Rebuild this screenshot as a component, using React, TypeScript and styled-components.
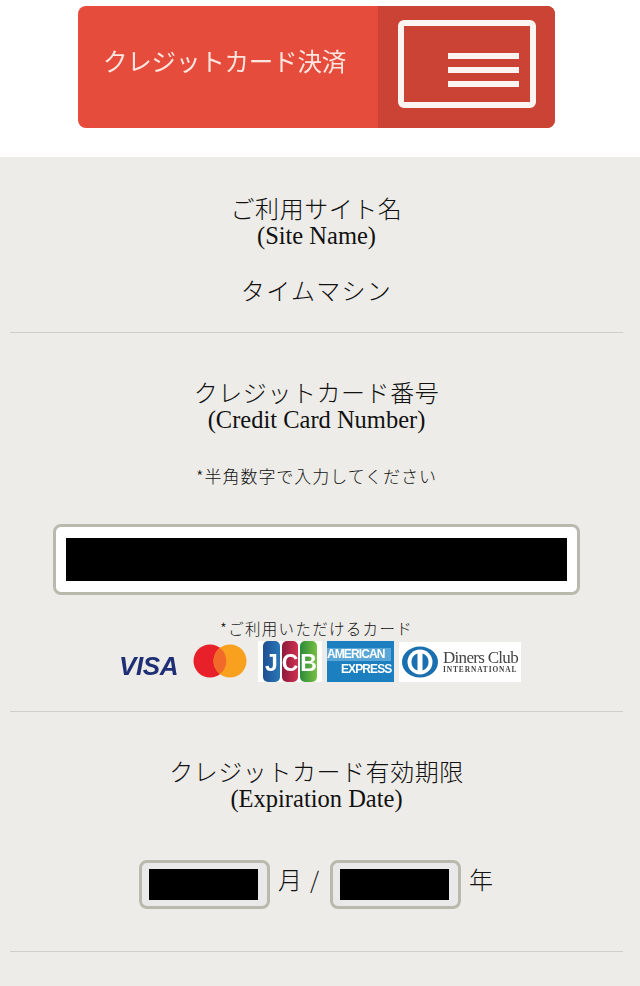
import React from "react";
import styled, { createGlobalStyle } from "styled-components";

const GlobalStyle = createGlobalStyle`
  html, body {
    margin: 0;
    padding: 0;
    background: #edece8;
    overflow: hidden;
  }
  body {
    font-family: "Liberation Serif", "Noto Sans CJK JP", serif;
    color: #111;
  }
`;

const Page = styled.div`
  width: 640px;
  height: 986px;
  overflow: hidden;
`;

const Top = styled.header`
  height: 157px;
  background: #fff;
  padding: 6px 0 0 78px;
  box-sizing: border-box;
`;

const PayButton = styled.div`
  width: 477px;
  height: 122px;
  border-radius: 8px;
  overflow: hidden;
  display: flex;
  background: #e64c3c;
  filter: blur(0.4px);
`;

const PayLabel = styled.div`
  width: 300px;
  padding: 37px 0 0 25px;
  box-sizing: border-box;
  color: #fbe6e0;
  font-family: "Noto Sans CJK JP", sans-serif;
  font-weight: 400;
  font-size: 24.5px;
  line-height: 36px;
  letter-spacing: -0.2px;
  white-space: nowrap;
`;

const MenuPart = styled.div`
  flex: 1;
  background: #cb4335;
  padding: 14px 0 0 20px;
`;

const MenuBox = styled.div`
  width: 138px;
  height: 88px;
  box-sizing: border-box;
  border: 6px solid #fbf4f0;
  border-radius: 6px;
  display: flex;
  flex-direction: column;
  align-items: flex-end;
  gap: 8px;
  padding: 27px 11px 0 0;
`;

const MenuLine = styled.span`
  width: 71px;
  height: 6px;
  background: #fbf4f0;
`;

const Section = styled.section<{ $height: number; $pad: number }>`
  margin: 0 17px 0 10px;
  height: ${(p) => p.$height}px;
  padding-top: ${(p) => p.$pad}px;
  box-sizing: border-box;
  border-bottom: 1px solid #cfcec8;
  display: flex;
  flex-direction: column;
  align-items: center;
`;

const Title = styled.div`
  font-family: "Noto Sans CJK JP", serif;
  font-weight: 300;
  font-size: 24px;
  line-height: 28px;
  letter-spacing: 0.55px;
  white-space: nowrap;
`;

const SubTitle = styled.div`
  font-size: 24.5px;
  line-height: 26px;
  margin-top: 1px;
  white-space: nowrap;
`;

const SiteValue = styled(Title)`
  margin-top: 27px;
  letter-spacing: 1.3px;
`;

const Hint = styled.div<{ $top: number; $size: number; $spacing: number }>`
  font-family: "Noto Sans CJK JP", serif;
  font-weight: 300;
  font-size: ${(p) => p.$size}px;
  line-height: 20px;
  letter-spacing: ${(p) => p.$spacing}px;
  margin-top: ${(p) => p.$top}px;
  white-space: nowrap;
`;

const NumberField = styled.div`
  width: 527px;
  height: 71px;
  box-sizing: border-box;
  margin-top: 38px;
  padding: 11px 10px;
  background: #fff;
  border: 3px solid #b9baad;
  border-radius: 8px;
`;

const Masked = styled.div`
  height: 100%;
  background: #000;
`;

const CardRow = styled.div`
  display: flex;
  align-items: flex-start;
  height: 41px;
  margin: 3px 0 0 7px;
  filter: blur(0.4px);
`;

const VisaMark = styled.div`
  width: 58px;
  margin: 12px 16px 0 0;
  color: #1f2f75;
  font-family: "Liberation Sans", sans-serif;
  font-weight: 700;
  font-style: italic;
  font-size: 26px;
  line-height: 26px;
  letter-spacing: -0.4px;
  text-align: center;
`;

const McMark = styled.svg`
  width: 54px;
  height: 34px;
  margin: 3px 11px 0 0;
`;

const JcbMark = styled.div`
  width: 64px;
  height: 41px;
  margin-right: 5px;
  background: #fff;
  box-sizing: border-box;
  padding: 0 5px;
  display: flex;
  gap: 2px;
`;

const JcbBar = styled.div<{ $from: string; $to: string }>`
  flex: 1;
  border-radius: 5px;
  background: linear-gradient(90deg, ${(p) => p.$from}, ${(p) => p.$to});
  color: #fff;
  font-family: "Liberation Sans", sans-serif;
  font-weight: 700;
  font-size: 23px;
  line-height: 44px;
  text-align: center;
  overflow: hidden;
`;

const AmexMark = styled.div`
  width: 67px;
  height: 41px;
  margin-right: 5px;
  background: #1c7fc0;
  color: #fff;
  font-family: "Liberation Sans", sans-serif;
  font-weight: 700;
  display: flex;
  flex-direction: column;
  overflow: hidden;
  white-space: nowrap;
`;

const AmexLine = styled.div<{ $indent: number }>`
  font-size: 12px;
  line-height: 13px;
  letter-spacing: -0.9px;
  margin: ${(p) => (p.$indent ? "2px" : "7px")} 0 0 ${(p) => p.$indent}px;
  background: ${(p) => (p.$indent ? "transparent" : "#5aa6d6")};
  width: ${(p) => 64 - p.$indent}px;
`;

const DinersMark = styled.div`
  width: 122px;
  height: 40px;
  margin-top: 1px;
  background: #fff;
  display: flex;
  align-items: center;
  padding-left: 2px;
  box-sizing: border-box;
  gap: 4px;
`;

const DinersRing = styled.svg`
  width: 38px;
  height: 32px;
  flex: none;
`;

const DinersText = styled.div`
  color: #444;
  font-family: "Liberation Serif", serif;
  white-space: nowrap;
`;

const DinersName = styled.div`
  font-size: 17px;
  line-height: 16px;
  letter-spacing: -0.7px;
`;

const DinersSub = styled.div`
  font-size: 7.4px;
  line-height: 8px;
  font-weight: 700;
  letter-spacing: 0.9px;
`;

const DateRow = styled.div`
  display: flex;
  align-items: center;
  margin: 47px 0 0 -1px;
  height: 50px;
`;

const DateField = styled.div`
  width: 131px;
  height: 49px;
  box-sizing: border-box;
  padding: 6px 9px 6px 7px;
  background: #e9e9e9;
  border: 3px solid #b9baad;
  border-radius: 8px;
`;

const DateUnit = styled.span<{ $gap: number }>`
  font-family: "Noto Sans CJK JP", serif;
  font-weight: 300;
  font-size: 24px;
  margin: -12px ${(p) => p.$gap}px 0 8px;
  white-space: nowrap;
`;

const Slash = styled.span`
  font-size: 23px;
  margin-left: 8px;
`;

export default function App() {
  return (
    <Page>
      <GlobalStyle />
      <Top>
        <PayButton>
          <PayLabel>クレジットカード決済</PayLabel>
          <MenuPart>
            <MenuBox>
              <MenuLine />
              <MenuLine />
              <MenuLine />
            </MenuBox>
          </MenuPart>
        </PayButton>
      </Top>
      <Section $height={176} $pad={37}>
        <Title>ご利用サイト名</Title>
        <SubTitle>(Site Name)</SubTitle>
        <SiteValue>タイムマシン</SiteValue>
      </Section>
      <Section $height={379} $pad={45}>
        <Title>クレジットカード番号</Title>
        <SubTitle>(Credit Card Number)</SubTitle>
        <Hint $top={33} $size={17} $spacing={0.95}>*半角数字で入力してください</Hint>
        <NumberField>
          <Masked />
        </NumberField>
        <Hint $top={23} $size={15.5} $spacing={1.3}>*ご利用いただけるカード</Hint>
        <CardRow>
          <VisaMark>VISA</VisaMark>
          <McMark viewBox="0 0 54 34">
            <circle cx="17" cy="17" r="16.5" fill="#e8202a" />
            <circle cx="37" cy="17" r="16.5" fill="#f9a01e" />
            <path d="M27 4a16.5 16.5 0 0 1 0 26a16.5 16.5 0 0 1 0-26z" fill="#f26a2a" />
          </McMark>
          <JcbMark>
            <JcbBar $from="#1d4f91" $to="#2a77b8">J</JcbBar>
            <JcbBar $from="#8c1c3c" $to="#d03050">C</JcbBar>
            <JcbBar $from="#2b8a3a" $to="#7ac043">B</JcbBar>
          </JcbMark>
          <AmexMark>
            <AmexLine $indent={0}>AMERICAN</AmexLine>
            <AmexLine $indent={14}>EXPRESS</AmexLine>
          </AmexMark>
          <DinersMark>
            <DinersRing viewBox="0 0 38 32">
              <ellipse cx="19" cy="16" rx="18" ry="15.5" fill="#1a6fb0" />
              <ellipse cx="19" cy="16" rx="12.5" ry="12.5" fill="#fff" />
              <path d="M16.5 7.5v17a9 9 0 0 1 0-17zM21.5 7.5a9 9 0 0 1 0 17z" fill="#1a6fb0" />
            </DinersRing>
            <DinersText>
              <DinersName>Diners Club</DinersName>
              <DinersSub>INTERNATIONAL</DinersSub>
            </DinersText>
          </DinersMark>
        </CardRow>
      </Section>
      <Section $height={240} $pad={45}>
        <Title>クレジットカード有効期限</Title>
        <SubTitle>(Expiration Date)</SubTitle>
        <DateRow>
          <DateField>
            <Masked />
          </DateField>
          <DateUnit $gap={11}>
            月<Slash>/</Slash>
          </DateUnit>
          <DateField>
            <Masked />
          </DateField>
          <DateUnit $gap={0}>年</DateUnit>
        </DateRow>
      </Section>
    </Page>
  );
}
